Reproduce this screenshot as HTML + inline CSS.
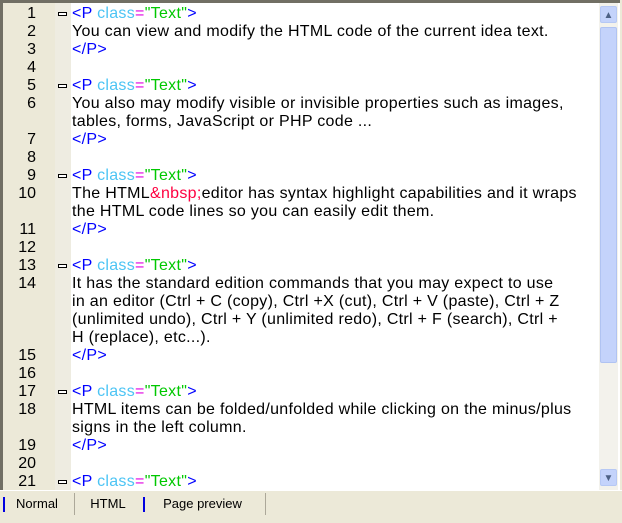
<!DOCTYPE html>
<html><head><style>
body{margin:0;width:622px;height:522px;background:#ECE9D8;position:relative;overflow:hidden;font-family:"Liberation Sans",sans-serif;}
#frame{position:absolute;left:0;top:0;width:620px;height:490px;border-left:3px solid #716F64;border-top:3px solid #716F64;box-sizing:border-box;background:#fff;}
#gut{position:absolute;left:3px;top:3px;width:52px;height:487px;background:#ECE9D8;}
#dots{position:absolute;left:55px;top:3px;width:16px;height:487px;background-color:#F5F3EB;background-image:radial-gradient(#DDD8C6 0.6px,transparent 0.8px);background-size:2px 2px;}
.r{position:absolute;left:0;height:18px;line-height:18px;font-size:16px;white-space:nowrap;}
.n{position:absolute;right:0;width:36px;text-align:right;color:#000;}
.t{position:absolute;left:72px;color:#000;letter-spacing:0.3px;}
.m{position:absolute;left:58px;top:7px;width:7px;height:2px;border:1px solid #000;background:#fff;}
.tg{color:#0000FF}.at{color:#4CC4F4}.eq{color:#E000E0}.vl{color:#00C800}.en{color:#FF0040}
#sb{position:absolute;left:599px;top:3px;width:19px;height:487px;background:#F3F2EC;}
.btn{position:absolute;left:1px;width:17px;height:17px;background:#C4D3FB;border:1px solid #B6C8F4;box-sizing:border-box;border-radius:2px;color:#4D6185;font-size:10px;text-align:center;line-height:17px;}
#thumb{position:absolute;left:1px;top:24px;width:17px;height:336px;background:#C4D3FB;border:1px solid #B0C3F2;box-sizing:border-box;border-radius:2px;}
#tabs{position:absolute;left:0;top:490px;width:622px;height:32px;border-top:1px solid #fff;}
.tab{position:absolute;top:2px;height:22px;font-size:13px;line-height:22px;text-align:center;border-right:1px solid #ACA899;}
.bl{position:absolute;left:3px;top:4px;width:2px;height:15px;background:#0000E0;}
</style></head><body>
<div id="frame"></div>
<div id="gut"></div>
<div id="dots"></div>
<div style="position:absolute;left:0;top:5px;width:598px;">
<div class="r" style="top:0;width:598px"><span class="n" style="left:0">1</span><span class="m"></span><span class="t"><span class="tg">&lt;P </span><span class="at">class</span><span class="eq">=</span><span class="vl">"Text"</span><span class="tg">&gt;</span></span></div>
<div class="r" style="top:18px"><span class="n" style="left:0">2</span><span class="t">You can view and modify the HTML code of the current idea text.</span></div>
<div class="r" style="top:36px"><span class="n" style="left:0">3</span><span class="t tg">&lt;/P&gt;</span></div>
<div class="r" style="top:54px"><span class="n" style="left:0">4</span></div>
<div class="r" style="top:72px"><span class="n" style="left:0">5</span><span class="m"></span><span class="t"><span class="tg">&lt;P </span><span class="at">class</span><span class="eq">=</span><span class="vl">"Text"</span><span class="tg">&gt;</span></span></div>
<div class="r" style="top:90px"><span class="n" style="left:0">6</span><span class="t">You also may modify visible or invisible properties such as images,</span></div>
<div class="r" style="top:108px"><span class="t">tables, forms, JavaScript or PHP code ...</span></div>
<div class="r" style="top:126px"><span class="n" style="left:0">7</span><span class="t tg">&lt;/P&gt;</span></div>
<div class="r" style="top:144px"><span class="n" style="left:0">8</span></div>
<div class="r" style="top:162px"><span class="n" style="left:0">9</span><span class="m"></span><span class="t"><span class="tg">&lt;P </span><span class="at">class</span><span class="eq">=</span><span class="vl">"Text"</span><span class="tg">&gt;</span></span></div>
<div class="r" style="top:180px"><span class="n" style="left:0">10</span><span class="t">The HTML<span class="en">&amp;nbsp;</span>editor has syntax highlight capabilities and it wraps</span></div>
<div class="r" style="top:198px"><span class="t">the HTML code lines so you can easily edit them.</span></div>
<div class="r" style="top:216px"><span class="n" style="left:0">11</span><span class="t tg">&lt;/P&gt;</span></div>
<div class="r" style="top:234px"><span class="n" style="left:0">12</span></div>
<div class="r" style="top:252px"><span class="n" style="left:0">13</span><span class="m"></span><span class="t"><span class="tg">&lt;P </span><span class="at">class</span><span class="eq">=</span><span class="vl">"Text"</span><span class="tg">&gt;</span></span></div>
<div class="r" style="top:270px"><span class="n" style="left:0">14</span><span class="t">It has the standard edition commands that you may expect to use</span></div>
<div class="r" style="top:288px"><span class="t">in an editor (Ctrl + C (copy), Ctrl +X (cut), Ctrl + V (paste), Ctrl + Z</span></div>
<div class="r" style="top:306px"><span class="t">(unlimited undo), Ctrl + Y (unlimited redo), Ctrl + F (search), Ctrl +</span></div>
<div class="r" style="top:324px"><span class="t">H (replace), etc...).</span></div>
<div class="r" style="top:342px"><span class="n" style="left:0">15</span><span class="t tg">&lt;/P&gt;</span></div>
<div class="r" style="top:360px"><span class="n" style="left:0">16</span></div>
<div class="r" style="top:378px"><span class="n" style="left:0">17</span><span class="m"></span><span class="t"><span class="tg">&lt;P </span><span class="at">class</span><span class="eq">=</span><span class="vl">"Text"</span><span class="tg">&gt;</span></span></div>
<div class="r" style="top:396px"><span class="n" style="left:0">18</span><span class="t">HTML items can be folded/unfolded while clicking on the minus/plus</span></div>
<div class="r" style="top:414px"><span class="t">signs in the left column.</span></div>
<div class="r" style="top:432px"><span class="n" style="left:0">19</span><span class="t tg">&lt;/P&gt;</span></div>
<div class="r" style="top:450px"><span class="n" style="left:0">20</span></div>
<div class="r" style="top:468px"><span class="n" style="left:0">21</span><span class="m"></span><span class="t"><span class="tg">&lt;P </span><span class="at">class</span><span class="eq">=</span><span class="vl">"Text"</span><span class="tg">&gt;</span></span></div>
</div>
<div id="sb">
<div class="btn" style="top:3px">&#9650;</div>
<div id="thumb"></div>
<div class="btn" style="top:466px">&#9660;</div>
</div>
<div id="tabs">
<div class="tab" style="left:0;width:74px">Normal<span class="bl"></span></div>
<div class="tab" style="left:77px;width:62px;border-right:none">HTML</div>
<div class="tab" style="left:140px;width:125px">Page preview<span class="bl"></span></div>
</div>
</body></html>
